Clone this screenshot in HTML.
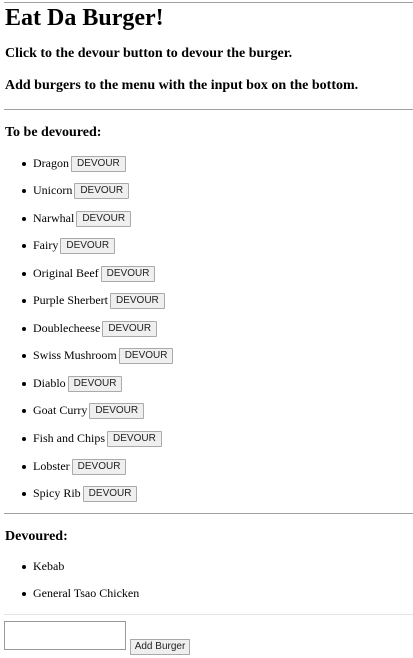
<!DOCTYPE html>
<html><head><meta charset="utf-8"><style>
body{margin:0;width:413px;height:658px;background:#fff;font-family:"Liberation Serif",serif;color:#000;position:relative;overflow:hidden}
.a{position:absolute;white-space:nowrap}
.hr{position:absolute;left:4px;right:0;height:0;border-top:1px solid #a0a0a0}
h1{position:absolute;margin:0;left:5px;top:5px;font-size:24px;font-weight:bold}
.b{font-weight:bold;font-size:14px;left:5px}
li{position:absolute;left:33px;list-style:none;font-size:12px;line-height:16px}
li:before{content:"";position:absolute;left:-11px;top:7px;width:4px;height:4px;border-radius:50%;background:#000}
button{font-family:"Liberation Sans",sans-serif;font-size:10px;padding:1px 5px;height:16px;line-height:12px;border:1px solid #aaa;background:#efefef;border-radius:1px;margin-left:2px;vertical-align:1px;color:#222}
</style></head><body>
<div class="hr" style="top:2px"></div>
<h1>Eat Da Burger!</h1>
<div class="a b" style="top:46px">Click to the devour button to devour the burger.</div>
<div class="a b" style="top:78px">Add burgers to the menu with the input box on the bottom.</div>
<div class="hr" style="top:109px"></div>
<div class="a b" style="top:125px">To be devoured:</div>
<ul style="margin:0;padding:0">
<li style="top:155px">Dragon<button>DEVOUR</button></li>
<li style="top:182px">Unicorn<button>DEVOUR</button></li>
<li style="top:210px">Narwhal<button>DEVOUR</button></li>
<li style="top:237px">Fairy<button>DEVOUR</button></li>
<li style="top:265px">Original Beef<button>DEVOUR</button></li>
<li style="top:292px">Purple Sherbert<button>DEVOUR</button></li>
<li style="top:320px">Doublecheese<button>DEVOUR</button></li>
<li style="top:347px">Swiss Mushroom<button>DEVOUR</button></li>
<li style="top:375px">Diablo<button>DEVOUR</button></li>
<li style="top:402px">Goat Curry<button>DEVOUR</button></li>
<li style="top:430px">Fish and Chips<button>DEVOUR</button></li>
<li style="top:458px">Lobster<button>DEVOUR</button></li>
<li style="top:485px">Spicy Rib<button>DEVOUR</button></li>
</ul>
<div class="hr" style="top:513px"></div>
<div class="a b" style="top:529px">Devoured:</div>
<ul style="margin:0;padding:0">
<li style="top:558px">Kebab</li>
<li style="top:585px">General Tsao Chicken</li>
</ul>
<div class="hr" style="top:614px;border-color:#e4e4e4"></div>
<div class="a" style="left:4px;top:621px;width:120px;height:27px;border:1px solid #999"></div>
<div class="a" style="left:130px;top:639px;width:58px;height:14px;border:1px solid #aaa;background:#efefef;font-family:'Liberation Sans',sans-serif;font-size:10px;line-height:14px;text-align:center;color:#222">Add Burger</div>
</body></html>
